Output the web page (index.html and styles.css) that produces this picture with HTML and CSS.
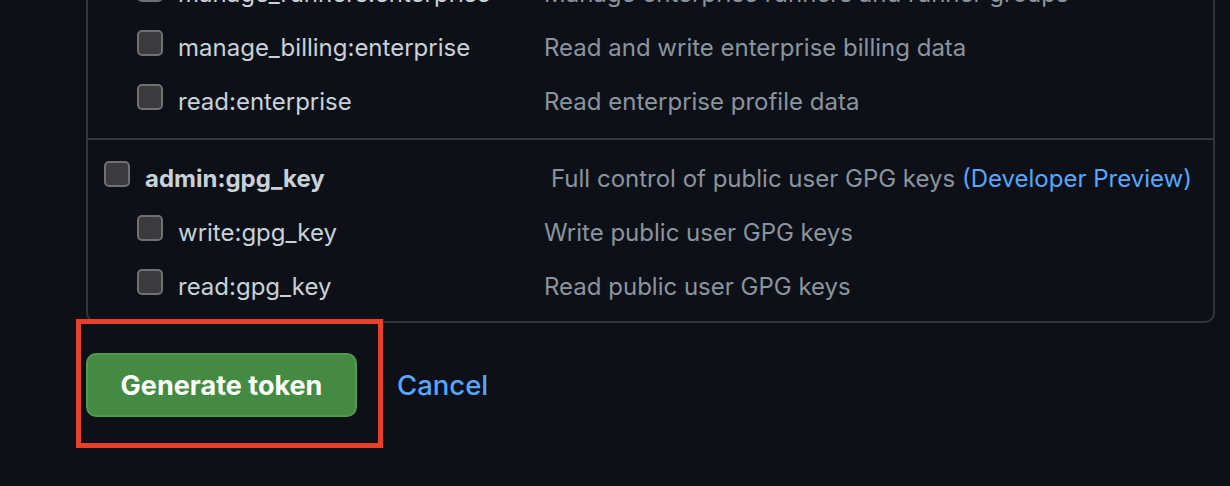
FILE: index.html
```html
<!DOCTYPE html>
<html>
<head>
<meta charset="utf-8">
<link rel="stylesheet" href="styles.css">
</head>
<body>
<div class="page">
  <div class="scopes">
    <div class="group">
      <div class="row sub">
        <span class="cb"></span>
        <span class="label">manage_runners:enterprise</span>
        <span class="desc">Manage enterprise runners and runner groups</span>
      </div>
      <div class="row sub">
        <span class="cb"></span>
        <span class="label">manage_billing:enterprise</span>
        <span class="desc">Read and write enterprise billing data</span>
      </div>
      <div class="row sub">
        <span class="cb"></span>
        <span class="label">read:enterprise</span>
        <span class="desc">Read enterprise profile data</span>
      </div>
    </div>
    <div class="group group-last">
      <div class="row parent">
        <span class="cb"></span>
        <span class="label">admin:gpg_key</span>
        <span class="desc">Full control of public user GPG keys <a class="link">(Developer Preview)</a></span>
      </div>
      <div class="row sub">
        <span class="cb"></span>
        <span class="label">write:gpg_key</span>
        <span class="desc">Write public user GPG keys</span>
      </div>
      <div class="row sub">
        <span class="cb"></span>
        <span class="label">read:gpg_key</span>
        <span class="desc">Read public user GPG keys</span>
      </div>
    </div>
  </div>
  <div class="actions">
    <button class="btn-primary">Generate token</button>
    <a class="cancel">Cancel</a>
    <div class="highlight"></div>
  </div>
</div>
</body>
</html>
```
FILE: styles.css
```css
html, body {
  margin: 0;
  padding: 0;
  background: #0d1117;
  height: 100%;
  overflow: hidden;
}
body {
  font-family: Inter, "Liberation Sans", sans-serif;
  color: #c9d1d9;
}
.page {
  padding-left: 86px;
  width: 1129px;
  margin-top: -34px;
}
.scopes {
  border: 2px solid #30363d;
  border-top: none;
  border-radius: 0 0 10px 10px;
}
.group {
  padding: 0 0 10px 0;
  border-bottom: 2px solid #30363d;
}
.group-last {
  border-bottom: none;
  padding: 11px 0 8px 0;
}
.row {
  display: flex;
  align-items: center;
  height: 54px;
  font-size: 24px;
}
.cb {
  flex: none;
  box-sizing: border-box;
  width: 26px;
  height: 26px;
  border: 2px solid #6e7074;
  background: #3b3b3d;
  border-radius: 5px;
  margin-bottom: 8px;
}
.sub {
  padding-left: 49px;
}
.parent {
  padding-left: 16px;
}
.label {
  margin-left: 15px;
  flex: none;
}
.sub .label {
  width: 366px;
}
.parent .label {
  width: 406px;
  font-weight: 700;
}
.desc {
  color: #8b949e;
}
.link {
  color: #58a6ff;
}
.actions {
  position: relative;
  display: flex;
  align-items: center;
  margin-top: 30px;
}
.btn-primary {
  box-sizing: border-box;
  width: 271px;
  height: 64px;
  background: #458a42;
  border: 2px solid #519a4e;
  border-radius: 10px;
  color: #ffffff;
  font-family: Inter, "Liberation Sans", sans-serif;
  font-size: 27px;
  font-weight: 700;
  padding: 0;
}
.cancel {
  margin-left: 40px;
  color: #58a6ff;
  font-size: 27.5px;
  font-weight: 500;
}
.highlight {
  position: absolute;
  left: -10px;
  top: -34px;
  width: 297px;
  height: 119px;
  border: 5px solid #e8412b;
}
```
